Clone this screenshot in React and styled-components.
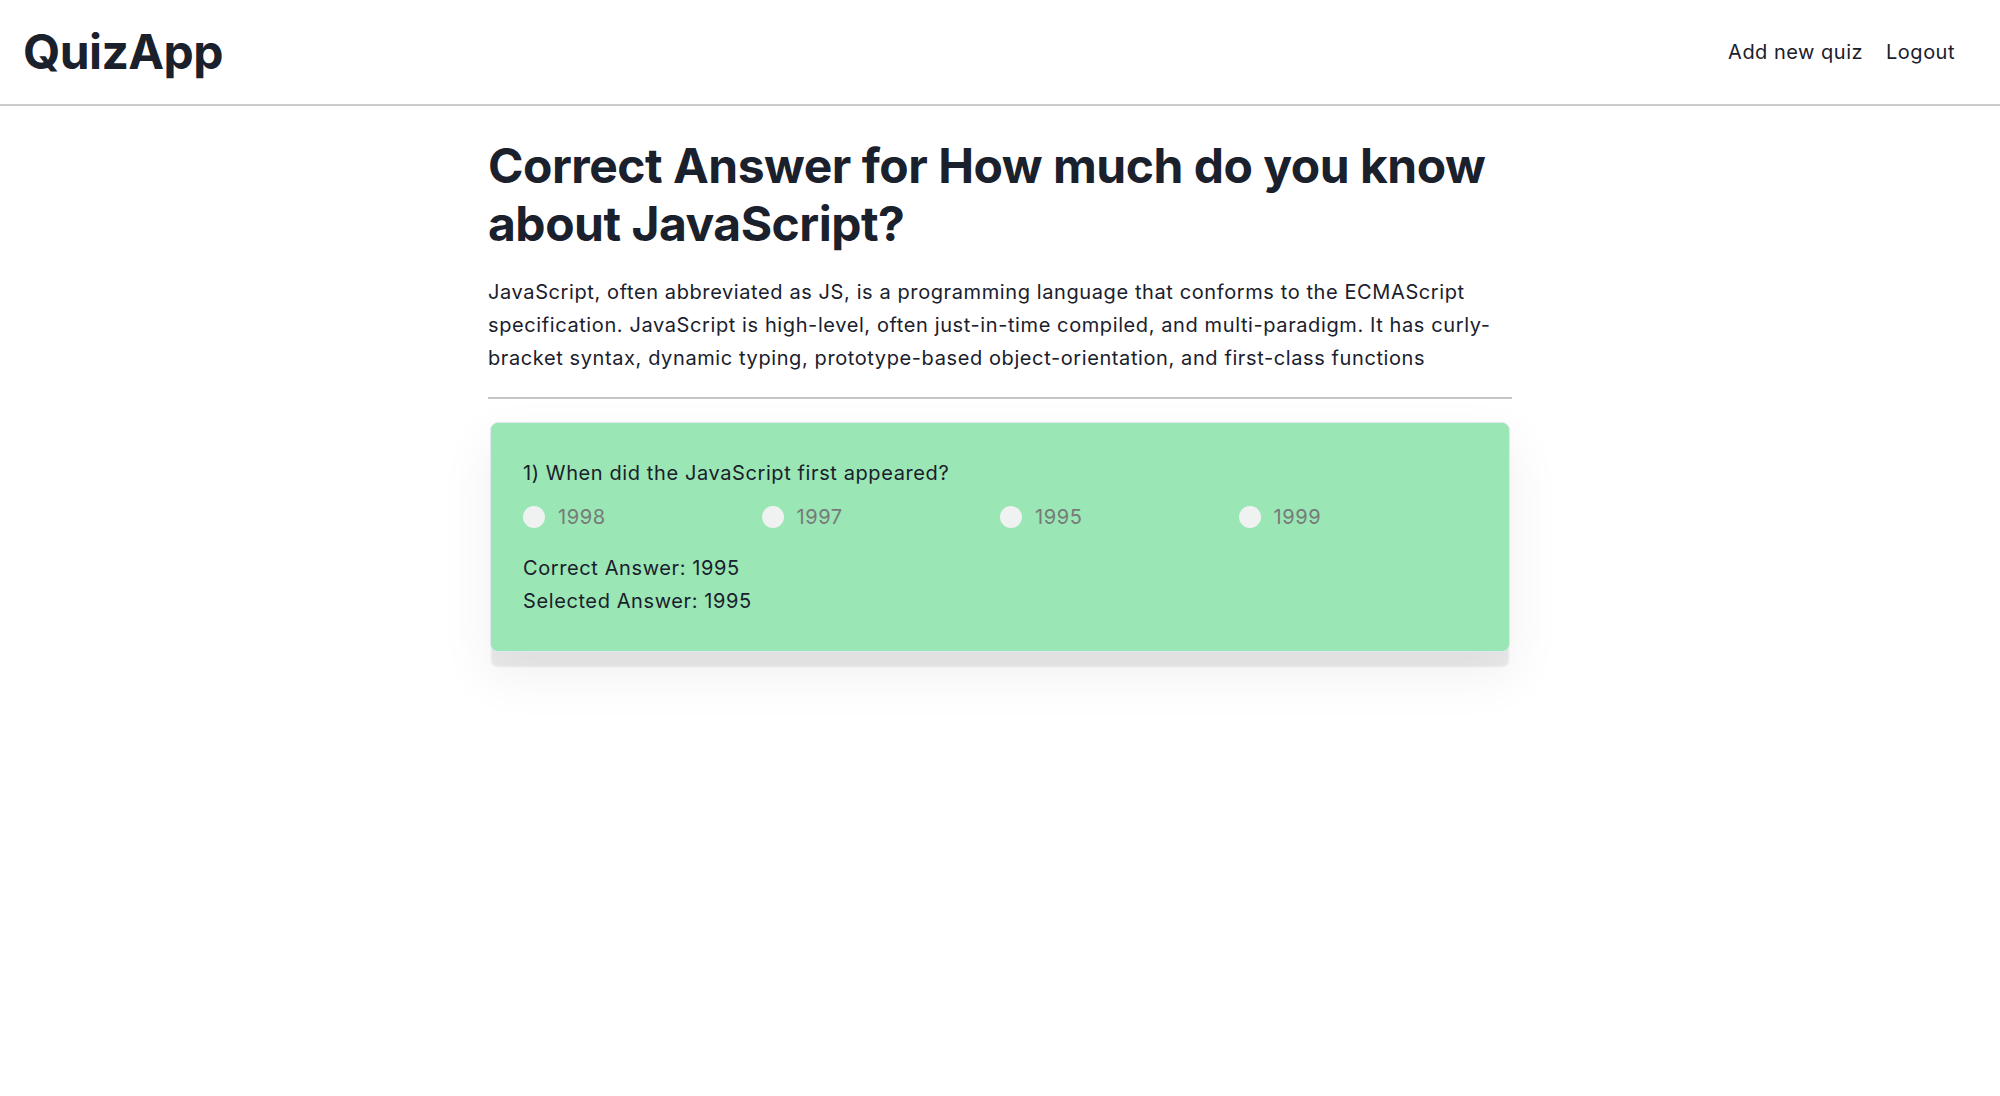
import React from "react";
import styled, { createGlobalStyle } from "styled-components";

const GlobalStyle = createGlobalStyle`
  body {
    margin: 0;
    min-height: 100vh;
    font-family: Inter, "Noto Sans", sans-serif;
    color: #1a202c;
    background: #fff;
  }
`;

const options = ["1998", "1997", "1995", "1999"];

function App() {
  return (
    <>
      <GlobalStyle />
      <Header>
        <Logo>QuizApp</Logo>
        <Nav>
          <NavLink href="#">Add new quiz</NavLink>
          <NavLink href="#">Logout</NavLink>
        </Nav>
      </Header>
      <Main>
        <Title>Correct Answer for How much do you know about JavaScript?</Title>
        <Description>
          JavaScript, often abbreviated as JS, is a programming language that conforms to the
          ECMAScript specification. JavaScript is high-level, often just-in-time compiled, and
          multi-paradigm. It has curly-bracket syntax, dynamic typing, prototype-based
          object-orientation, and first-class functions
        </Description>
        <Divider />
        <Card>
          <Question>1) When did the JavaScript first appeared?</Question>
          <Options>
            {options.map((o) => (
              <Option key={o}>
                <Radio type="radio" name="q1" value={o} disabled />
                <OptionLabel>{o}</OptionLabel>
              </Option>
            ))}
          </Options>
          <Result>Correct Answer: 1995</Result>
          <Result>Selected Answer: 1995</Result>
        </Card>
      </Main>
    </>
  );
}

export default App;

const Header = styled.header`
  display: flex;
  justify-content: space-between;
  align-items: center;
  height: 104px;
  padding: 0 45px 0 23px;
  border-bottom: 2px solid #cccccc;
`;

const Logo = styled.h1`
  margin: 0;
  font-size: 48px;
  font-weight: 700;
  line-height: 1.2;
  letter-spacing: -0.6px;
  color: #1a202c;
`;

const Nav = styled.nav`
  display: flex;
  gap: 23px;
`;

const NavLink = styled.a`
  font-size: 20px;
  letter-spacing: 0.5px;
  color: #1a202c;
  text-decoration: none;
`;

const Main = styled.main`
  max-width: 1024px;
  margin: 0 auto;
  padding-bottom: 120px;
`;

const Title = styled.h2`
  margin: 31px 0 24px;
  font-size: 48px;
  font-weight: 700;
  line-height: 1.2;
  letter-spacing: -0.5px;
  color: #1a202c;
`;

const Description = styled.p`
  margin: 0 0 22px;
  font-size: 20px;
  line-height: 33px;
  letter-spacing: 0.6px;
  color: #1a202c;
`;

const Divider = styled.hr`
  margin: 0 0 23px;
  border: 0;
  height: 2px;
  background: #c6c6c6;
`;

const Card = styled.section`
  margin: 0 2px;
  padding: 34px 32px 33px;
  background: #9ae6b4;
  border: 1px solid #e2e8f0;
  border-radius: 8px;
  box-shadow: 0 16px 2px -1px rgba(0, 0, 0, 0.08), 0 22px 50px 6px rgba(0, 0, 0, 0.05);
`;

const Question = styled.p`
  margin: 0 0 10px;
  font-size: 20px;
  line-height: 33px;
  letter-spacing: 0.6px;
`;

const Options = styled.div`
  display: grid;
  grid-template-columns: repeat(4, 1fr);
  margin-bottom: 19px;
`;

const Option = styled.label`
  display: flex;
  align-items: center;
  height: 33px;
`;

const Radio = styled.input`
  appearance: none;
  margin: 0;
  width: 22px;
  height: 22px;
  border-radius: 50%;
  background: #f0f2f1;
`;

const OptionLabel = styled.span`
  margin-left: 13px;
  font-size: 20px;
  letter-spacing: 0.6px;
  color: #767a79;
`;

const Result = styled.p`
  margin: 0;
  font-size: 20px;
  line-height: 33px;
  letter-spacing: 0.6px;
`;
